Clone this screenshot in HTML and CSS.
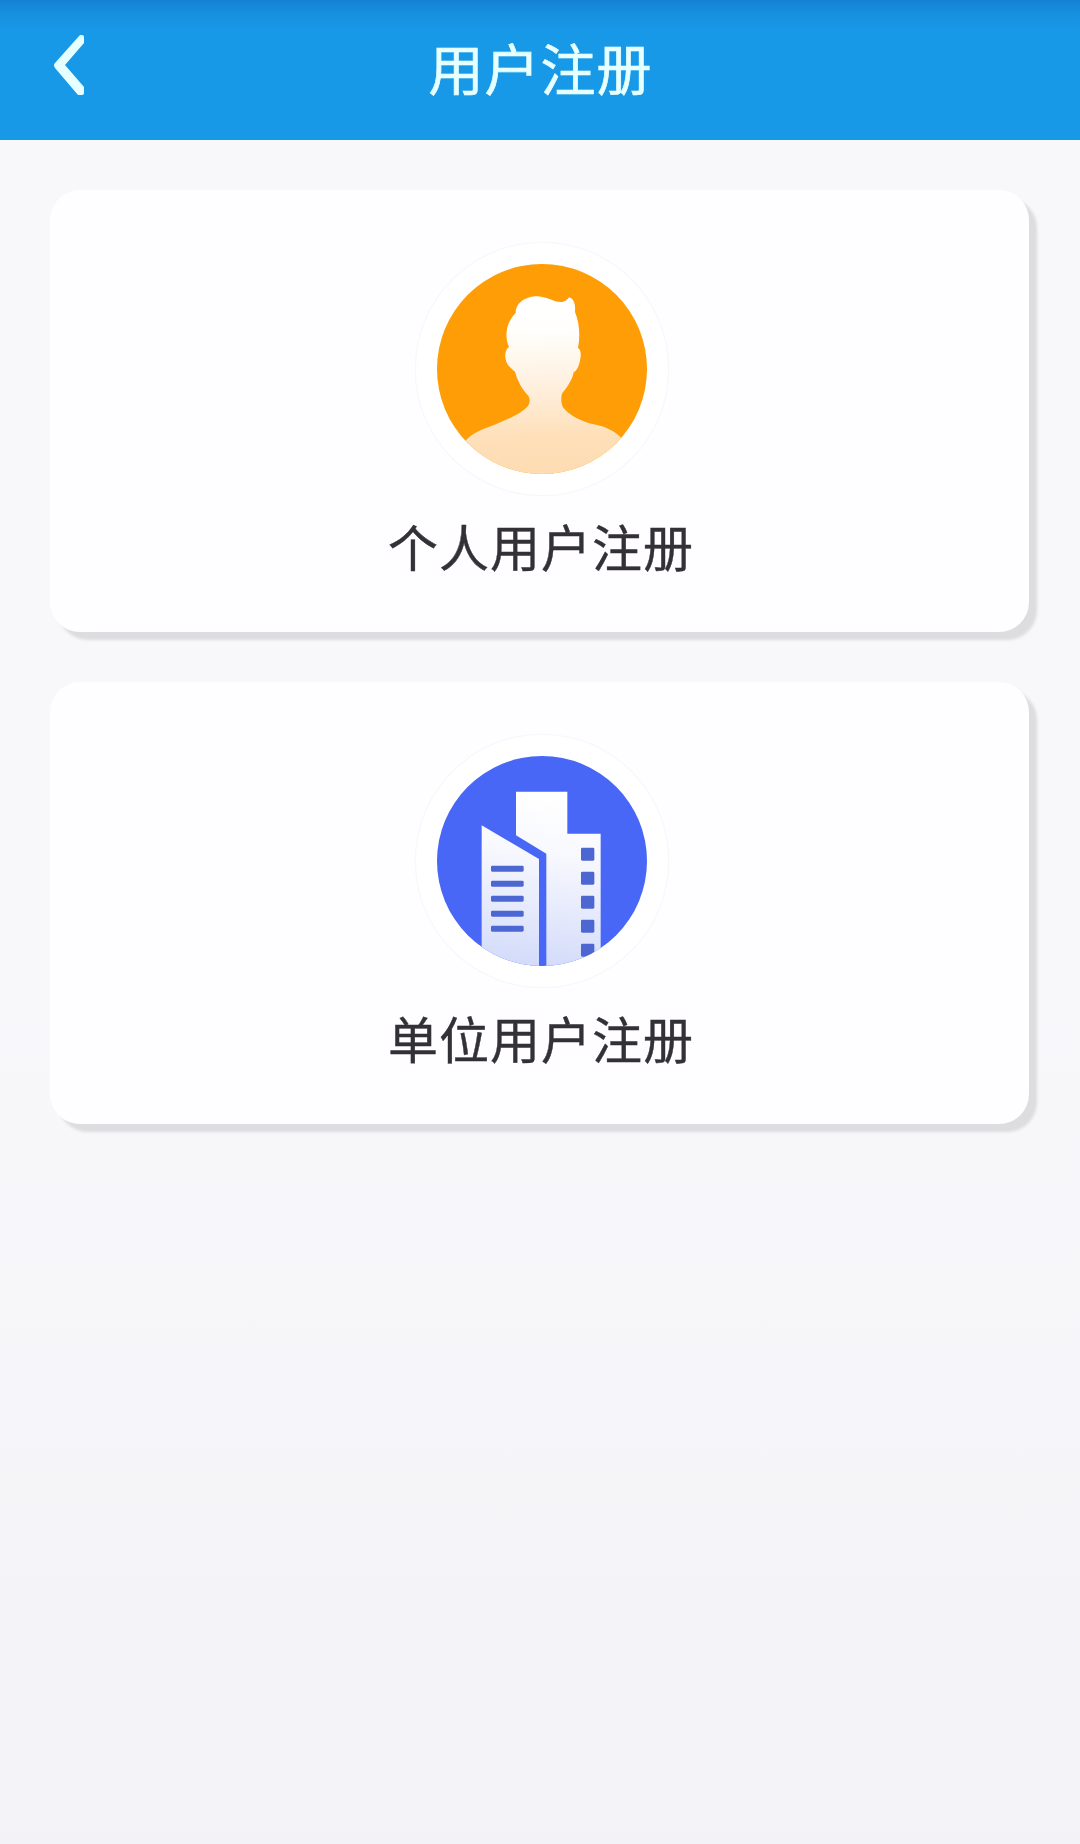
FILE: index.html
```
<!DOCTYPE html>
<html lang="zh-CN">
<head>
    <meta charset="UTF-8">
    <meta name="viewport" content="width=device-width, initial-scale=1.0">
    <title>用户注册</title>
    <link rel="stylesheet" href="styles.css">
</head>
<body>
    <header class="header">
        <a href="#" class="back-btn" aria-label="返回">
            <svg width="30" height="62" viewBox="0 0 30 62">
                <path d="M26 0H28Q30 0 30 2V8L11 30L30 52V58Q30 60 28 60H24L1 33Q-1 30 1 28Z"/>
            </svg>
        </a>
        <h1>用户注册</h1>
    </header>

    <main class="container">
        <!-- 个人用户 -->
        <a href="#" class="card">
            <svg class="card-icon" viewBox="41 34 768 768">
                <defs>
                    <linearGradient id="personFill" gradientUnits="userSpaceOnUse" x1="415" y1="200" x2="435" y2="733">
                        <stop offset="0" stop-color="#fff"/>
                        <stop offset="0.2" stop-color="#fffefb"/>
                        <stop offset="0.5" stop-color="#fef0df"/>
                        <stop offset="0.8" stop-color="#fedfb8"/>
                        <stop offset="1" stop-color="#fddcb2"/>
                    </linearGradient>
                    <clipPath id="personClip"><circle cx="425" cy="418" r="315"/></clipPath>
                </defs>
                <circle class="ring" cx="425" cy="418" r="380"/>
                <circle cx="425" cy="418" r="315" fill="#fe9d05"/>
                <path clip-path="url(#personClip)" fill="url(#personFill)" d="M190 640C215 606 250 598 290 582C330 566 365 550 382 530C390 520 389 506 384 498C365 478 352 455 344 426C326 412 313 398 315 374C316 362 320 357 326 352C313 325 315 280 346 250C346 218 378 200 412 200C444 202 462 220 486 217C497 215 500 209 507 203C520 209 526 221 524 247C538 282 540 320 533 355C541 359 543 373 540 387C537 408 530 422 520 428C515 452 503 470 486 490C481 502 482 524 489 534C510 560 545 575 580 584C615 590 645 605 664 626L664 760H190Z"/>
            </svg>
            <span class="card-text">个人用户注册</span>
        </a>

        <!-- 单位用户 -->
        <a href="#" class="card">
            <svg class="card-icon" viewBox="41 34 768 768">
                <defs>
                    <linearGradient id="unitFill" gradientUnits="userSpaceOnUse" x1="460" y1="210" x2="400" y2="733">
                        <stop offset="0" stop-color="#fff"/>
                        <stop offset="0.35" stop-color="#f8f9fe"/>
                        <stop offset="1" stop-color="#d3dbfa"/>
                    </linearGradient>
                    <clipPath id="unitClip"><circle cx="425" cy="418" r="315"/></clipPath>
                </defs>
                <circle class="ring" cx="425" cy="418" r="380"/>
                <circle cx="425" cy="418" r="315" fill="#4867f6"/>
                <g clip-path="url(#unitClip)">
                    <path fill="url(#unitFill)" d="M244 311L416 412V740H244Z"/>
                    <path fill="url(#unitFill)" d="M347 210H501V336H601V740H438V396L347 341Z"/>
                    <g fill="#4c67d2">
                        <rect x="272" y="432" width="98" height="18" rx="4"/>
                        <rect x="272" y="477" width="98" height="18" rx="4"/>
                        <rect x="272" y="522" width="98" height="18" rx="4"/>
                        <rect x="272" y="567" width="98" height="18" rx="4"/>
                        <rect x="272" y="612" width="98" height="18" rx="4"/>
                        <rect x="542" y="378" width="40" height="39" rx="4"/>
                        <rect x="542" y="450" width="40" height="39" rx="4"/>
                        <rect x="542" y="522" width="40" height="39" rx="4"/>
                        <rect x="542" y="594" width="40" height="39" rx="4"/>
                        <rect x="542" y="666" width="40" height="39" rx="4"/>
                    </g>
                </g>
            </svg>
            <span class="card-text">单位用户注册</span>
        </a>
    </main>
</body>
</html>
```
FILE: styles.css
```
* {
    box-sizing: border-box;
}
body {
    margin: 0;
    min-height: 1844px;
    font-family: "Noto Sans CJK SC", sans-serif;
    background: linear-gradient(#f8f7fa 0, #f8f7fa 1000px, #f3f2f6 1844px);
}
.header {
    display: grid;
    grid-template-columns: 120px 1fr 120px;
    height: 140px;
    background: linear-gradient(#1580d4 0, #168fde 12px, #1899e8 32px);
}
.back-btn {
    padding: 35px 0 0 54px;
}
.back-btn svg {
    display: block;
    fill: #e6ffff;
}
h1 {
    margin: 0;
    padding-left: 1px;
    color: #e6ffff;
    font-size: 55px;
    font-weight: 400;
    letter-spacing: 1px;
    line-height: 132px;
    text-align: center;
    -webkit-text-stroke: 0.7px;
}
.container {
    display: flex;
    flex-direction: column;
    gap: 50px;
    padding: 50px 51px 50px 50px;
}
.card {
    display: flex;
    flex-direction: column;
    align-items: center;
    height: 442px;
    padding-top: 51px;
    background-color: #fefdff;
    border-radius: 30px;
    box-shadow: 8px 8px 3px #dddcdf;
    color: #333136;
    text-decoration: none;
}
.card-icon {
    width: 256px;
    height: 256px;
    margin-left: 4px;
}
.ring {
    fill: #fff;
    stroke: #f8f7fa;
    stroke-width: 4;
}
.card-text {
    margin-top: 11px;
    padding-left: 3px;
    font-size: 50px;
    letter-spacing: 1px;
    line-height: 74px;
    -webkit-text-stroke: 0.4px;
}
```
